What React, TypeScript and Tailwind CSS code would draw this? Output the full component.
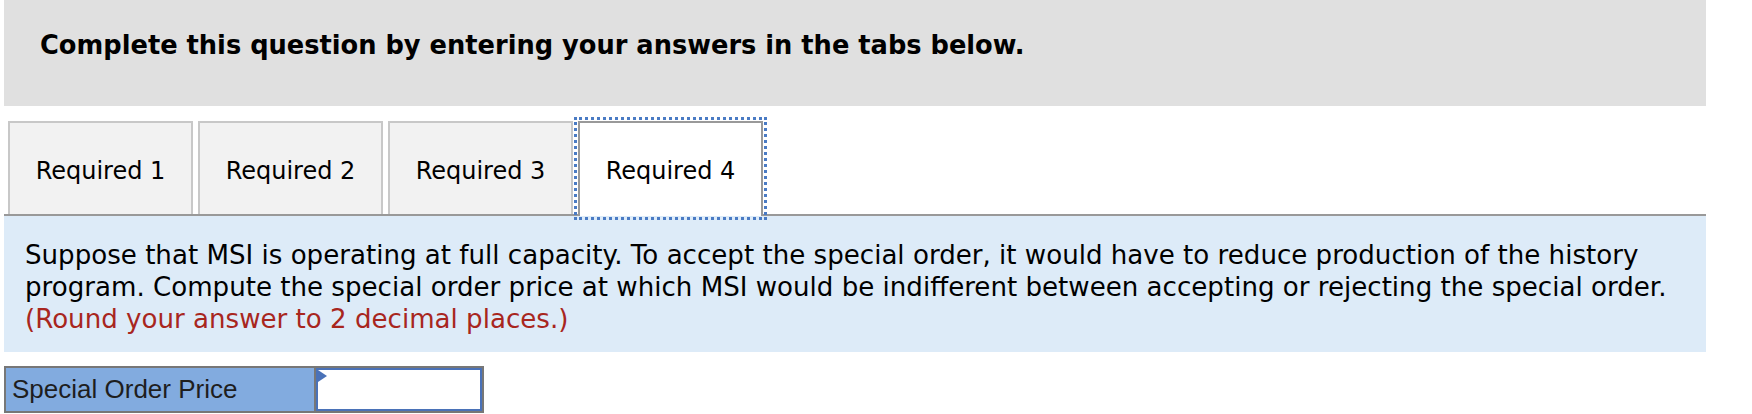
import React from 'react';

const tabs = ['Required 1', 'Required 2', 'Required 3', 'Required 4'];

export default function App() {
  const active = 3;

  return (
    <div className="w-[1752px] h-[414px] bg-white overflow-hidden text-black">
      <div className="ml-[4px] w-[1702px]">
        {/* Header */}
        <div className="h-[106px] bg-[#e0e0e0] pt-[30px] pl-[36px]">
          <h2 className="text-[25.7px] leading-[30px] font-bold font-['DejaVu_Sans',Verdana,sans-serif]">
            Complete this question by entering your answers in the tabs below.
          </h2>
        </div>

        {/* Tabs */}
        <div className="mt-[15px] flex gap-[5px] pl-[4px] border-b-2 border-[#999999] h-[95px]">
          {tabs.map((t, i) =>
            i === active ? (
              <div
                key={t}
                className="relative z-10 w-[185px] h-[95px] bg-white border-2 border-b-0 border-[#999999] flex items-center justify-center outline-dotted outline-[3px] outline-[#4a7bc4] outline-offset-[1px] text-[24px] font-['DejaVu_Sans',Verdana,sans-serif] pt-[2px]"
              >
                {t}
              </div>
            ) : (
              <div
                key={t}
                className="w-[185px] h-[93px] bg-[#f2f2f2] border-2 border-b-0 border-[#c8c8c8] flex items-center justify-center text-[24px] font-['DejaVu_Sans',Verdana,sans-serif] pt-[4px]"
              >
                {t}
              </div>
            )
          )}
        </div>

        {/* Question */}
        <div className="bg-[#ddebf8] h-[136px] pt-[23px] pl-[21px] text-[26.1px] leading-[32px] font-['DejaVu_Sans',Verdana,sans-serif] whitespace-nowrap">
          Suppose that MSI is operating at full capacity. To accept the special order, it would have to reduce production of the history
          <br />
          program. Compute the special order price at which MSI would be indifferent between accepting or rejecting the special order.
          <br />
          <span className="text-[#a8261e]">(Round your answer to 2 decimal places.)</span>
        </div>

        {/* Answer row */}
        <div className="mt-[14px] flex w-[480px] h-[47px] border-2 border-[#777777] font-['Liberation_Sans',Arial,sans-serif]">
          <div className="w-[310px] bg-[#82abdf] border-r-2 border-[#777777] flex items-center pl-[6px] text-[26px] text-[#1e1e1e]">
            Special Order Price
          </div>
          <div className="relative flex-1 bg-white border-2 border-[#4a72b8]">
            <span className="absolute left-0 top-0 w-0 h-0 border-y-[6px] border-y-transparent border-l-[9px] border-l-[#4a72b8]" />
            <input className="w-full h-full outline-none bg-transparent px-2 text-[22px]" aria-label="Special Order Price" />
          </div>
        </div>
      </div>
    </div>
  );
}
